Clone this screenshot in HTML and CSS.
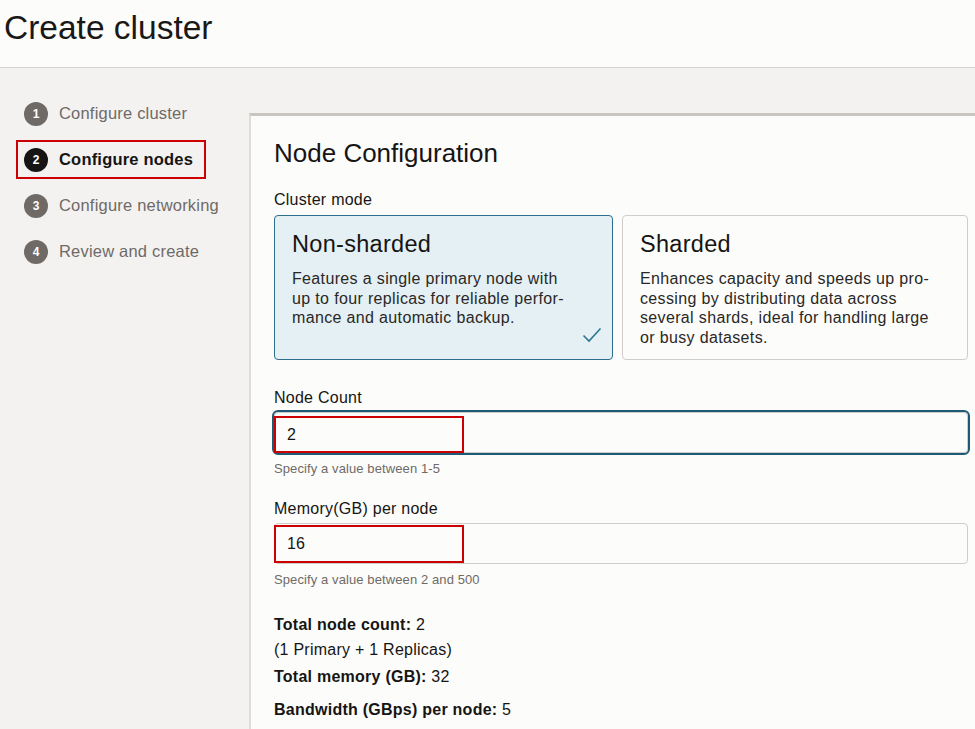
FILE: index.html
```html
<!DOCTYPE html>
<html lang="en">
<head>
<meta charset="utf-8">
<title>Create cluster</title>
<link rel="stylesheet" href="styles.css">
</head>
<body>
<header class="page-header">
  <h1 class="page-title">Create cluster</h1>
</header>
<div class="main">
  <nav class="steps">
    <div class="step"><span class="step-num">1</span><span class="step-label">Configure cluster</span></div>
    <div class="step step-active"><span class="step-num">2</span><span class="step-label">Configure nodes</span></div>
    <div class="step"><span class="step-num">3</span><span class="step-label">Configure networking</span></div>
    <div class="step"><span class="step-num">4</span><span class="step-label">Review and create</span></div>
  </nav>
  <section class="panel">
    <h2 class="panel-title">Node Configuration</h2>
    <div class="field-label mode-label">Cluster mode</div>
    <div class="cards">
      <div class="card card-selected">
        <div class="card-title">Non-sharded</div>
        <p class="card-desc">Features a single primary node with<br>up to four replicas for reliable perfor-<br>mance and automatic backup.</p>
        <svg class="card-check" width="20" height="16" viewBox="0 0 20 16"><path d="M1.5 8.5 L7 14 L18.5 1.5" fill="none" stroke="#2c7595" stroke-width="1.6"/></svg>
      </div>
      <div class="card">
        <div class="card-title">Sharded</div>
        <p class="card-desc">Enhances capacity and speeds up pro-<br>cessing by distributing data across<br>several shards, ideal for handling large<br>or busy datasets.</p>
      </div>
    </div>

    <div class="field-label count-label">Node Count</div>
    <div class="input input-focused">
      <span class="mark">2</span>
    </div>
    <div class="help">Specify a value between 1-5</div>

    <div class="field-label mem-label">Memory(GB) per node</div>
    <div class="input">
      <span class="mark">16</span>
    </div>
    <div class="help">Specify a value between 2 and 500</div>

    <div class="totals">
      <div class="total-line"><b>Total node count:</b> 2</div>
      <div class="total-line">(1 Primary + 1 Replicas)</div>
      <div class="total-line total-mem"><b>Total memory (GB):</b> 32</div>
      <div class="total-line total-bw"><b>Bandwidth (GBps) per node:</b> 5</div>
    </div>
  </section>
</div>
</body>
</html>
```

FILE: styles.css
```css
* { box-sizing: border-box; }

html, body {
  margin: 0;
  padding: 0;
  height: 100%;
}

body {
  font-family: "Liberation Sans", Arial, sans-serif;
  color: #161513;
  background: #f3f2f1;
  display: flex;
  flex-direction: column;
  overflow: hidden;
}

.page-header {
  background: #fcfcfb;
  height: 68px;
  border-bottom: 1px solid #d6d3d0;
  padding: 8px 0 0 4px;
  flex: none;
}

.page-title {
  margin: 0;
  font-size: 33.5px;
  font-weight: normal;
  line-height: 40px;
  color: #1a1816;
}

.main {
  flex: 1;
  display: flex;
  align-items: flex-start;
}

.steps {
  width: 249px;
  flex: none;
  padding: 26px 0 0 16px;
  display: flex;
  flex-direction: column;
  gap: 7px;
}

.step {
  display: flex;
  align-items: center;
  height: 39px;
  width: 190px;
  padding-left: 6px;
  border: 2px solid transparent;
  gap: 11px;
  white-space: nowrap;
}

.step-num {
  width: 24px;
  height: 24px;
  flex: none;
  border-radius: 50%;
  background: #6f6a66;
  color: #fff;
  font-size: 12px;
  font-weight: bold;
  display: flex;
  align-items: center;
  justify-content: center;
}

.step-label {
  font-size: 16.5px;
  letter-spacing: 0.2px;
  color: #6f6a66;
}

.step-active {
  border-color: #cc0000;
}

.step-active .step-num {
  background: #161513;
}

.step-active .step-label {
  color: #161513;
  font-weight: bold;
}

.panel {
  flex: 1;
  margin-top: 45px;
  background: #fcfcfb;
  border-top: 3px solid #c9c5c1;
  border-left: 2px solid #dedbd8;
  padding: 22px 7px 40px 23px;
  min-height: 700px;
}

.panel-title {
  margin: 0;
  font-size: 26px;
  font-weight: normal;
  line-height: 30px;
}

.field-label {
  font-size: 16px;
  letter-spacing: 0.25px;
  line-height: 20px;
}

.mode-label { margin-top: 22px; }

.cards {
  margin-top: 5px;
  display: grid;
  grid-template-columns: 339px 346px;
  gap: 9px;
}

.card {
  position: relative;
  height: 145px;
  border: 1px solid #cfccc9;
  border-radius: 4px;
  background: #fcfcfb;
  padding: 14px 17px 0 17px;
  white-space: nowrap;
}

.card-selected {
  background: #e4f0f4;
  border-color: #2c6e8c;
}

.card-title {
  font-size: 23.5px;
  letter-spacing: 0.3px;
  line-height: 28px;
}

.card-desc {
  margin: 11px 0 0 0;
  font-size: 16px;
  letter-spacing: 0.35px;
  line-height: 19.5px;
  color: #2a2826;
}

.card-check {
  position: absolute;
  right: 10px;
  bottom: 16px;
}

.count-label { margin-top: 28px; }
.mem-label { margin-top: 22px; }

.input {
  position: relative;
  margin-top: 4px;
  height: 41px;
  border: 1px solid #cfccc9;
  border-radius: 4px;
  background: #fcfcfb;
}

.input-focused {
  outline: 2px solid #1e5a74;
  outline-offset: 0;
}

.mark {
  position: absolute;
  left: -1px;
  top: 1px;
  width: 190px;
  height: 38px;
  border: 2px solid #cc0000;
  padding-left: 11px;
  display: flex;
  align-items: center;
  font-size: 16px;
  color: #161513;
}

.input-focused .mark { top: 3px; height: 37px; }

.help {
  margin-top: 8px;
  font-size: 13px;
  letter-spacing: 0.1px;
  line-height: 16px;
  color: #6f6a66;
}

.totals { margin-top: 27px; }

.total-line {
  font-size: 16px;
  letter-spacing: 0.25px;
  line-height: 20px;
  margin-bottom: 5px;
}

.total-line b { font-weight: bold; }

.total-mem { margin-top: 7px; }
.total-bw { margin-top: 13px; }
```
